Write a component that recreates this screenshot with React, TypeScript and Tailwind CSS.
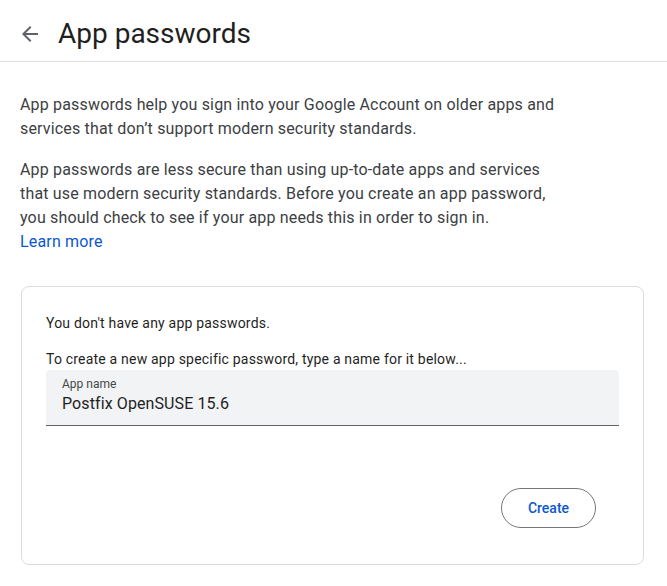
import React from "react";

function BackArrow() {
  return (
    <svg viewBox="0 0 24 24" className="size-6 fill-[#5f6368]">
      <path d="M20 11H7.83l5.59-5.59L12 4l-8 8 8 8 1.41-1.41L7.83 13H20v-2z" />
    </svg>
  );
}

export default function App() {
  return (
    <div className="min-h-[586px] w-[667px] bg-white font-['Roboto',sans-serif] text-[#1f1f1f]">
      <header className="flex h-[62px] items-center gap-4 border-b border-[#dadce0] pl-[18px] pt-[6px]">
        <BackArrow />
        <h1 className="text-[28px] leading-9 font-normal text-[#1f1f1f]">App passwords</h1>
      </header>

      <main className="px-5 pt-[31px]">
        <p className="text-[16px] leading-6 tracking-[0.17px] text-[#3c4043]">
          App passwords help you sign into your Google Account on older apps and
          <br />
          services that don’t support modern security standards.
        </p>
        <p className="mt-[17px] text-[16px] leading-6 tracking-[0.17px] text-[#3c4043]">
          App passwords are less secure than using up-to-date apps and services
          <br />
          that use modern security standards. Before you create an app password,
          <br />
          you should check to see if your app needs this in order to sign in.
          <br />
          <a className="text-[#0b57d0]">Learn more</a>
        </p>

        <section className="mt-[32px] ml-px mr-[3px] flex h-[279px] flex-col rounded-lg border border-[#dadce0] px-6 pt-[26px]">
          <p className="text-[14px] leading-5 tracking-[0.2px] text-[#1f1f1f]">You don't have any app passwords.</p>
          <p className="mt-4 text-[14px] leading-5 tracking-[0.2px] text-[#1f1f1f]">
            To create a new app specific password, type a name for it below...
          </p>
          <div className="mt-px flex h-[56px] flex-col rounded-t bg-[#f1f3f4] border-b border-[#5f6368] px-4 pt-[6px]">
            <span className="text-[12px] leading-4 text-[#444746]">App name</span>
            <span className="text-[16px] leading-6 tracking-[0.1px] text-[#1f1f1f]">Postfix OpenSUSE 15.6</span>
          </div>
          <div className="mt-[62px] flex justify-end pr-[23px]">
            <button className="h-10 w-[95px] rounded-full border border-[#747775] text-[14px] font-medium text-[#0b57d0]">
              Create
            </button>
          </div>
        </section>
      </main>
    </div>
  );
}
